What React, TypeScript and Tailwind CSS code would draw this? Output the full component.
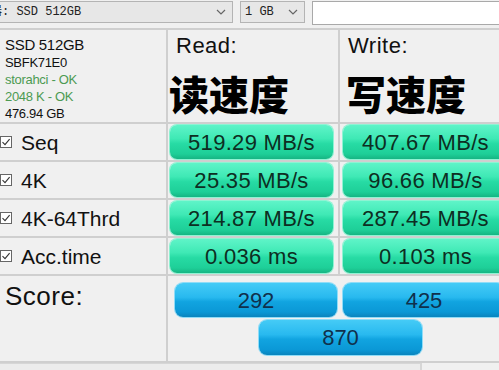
import React from "react";

const green =
  "bg-[linear-gradient(to_bottom,#5ff4c8_0%,#3fe9b5_40%,#27dba4_55%,#1ecf98_85%,#16b583_100%)] shadow-[0_0_0_1px_#8ef3d3]";
const blue =
  "bg-[linear-gradient(to_bottom,#45cbf6_0%,#28b9ef_42%,#11a4e0_55%,#0b98d6_85%,#0a84bd_100%)] shadow-[0_0_0_1px_#8fdcf7]";

function Check() {
  return (
    <svg width="12" height="12" viewBox="0 0 12 12" className="shrink-0">
      <rect x="0.5" y="0.5" width="11" height="11" fill="#fff" stroke="#666" strokeWidth="1" />
      <path d="M2.5 6.2 L5 8.6 L9.6 3.2" fill="none" stroke="#333" strokeWidth="1.1" />
    </svg>
  );
}

function Chevron() {
  return (
    <svg width="10" height="6" viewBox="0 0 10 6">
      <path d="M1 1 L5 5 L9 1" fill="none" stroke="#666" strokeWidth="1.2" />
    </svg>
  );
}

const rows = [
  { label: "Seq", r: "519.29 MB/s", w: "407.67 MB/s" },
  { label: "4K", r: "25.35 MB/s", w: "96.66 MB/s" },
  { label: "4K-64Thrd", r: "214.87 MB/s", w: "287.45 MB/s" },
  { label: "Acc.time", r: "0.036 ms", w: "0.103 ms" },
];

export default function App() {
  return (
    <div className="w-[499px] h-[370px] overflow-hidden bg-[#f0f0f0] font-['Liberation_Sans',Arial,sans-serif] text-[#111]">
      {/* top bar */}
      <div className="h-[30px] border-b-2 border-[#cfcfcf] flex items-start pt-[1px] w-[520px]">
        <div className="ml-[-4px] w-[237px] h-[22px] border border-[#b4b4b4] bg-[#e7e7e7] flex items-center justify-between pr-[6px] overflow-hidden">
          <span className="ml-[-7px] text-[12px] font-['Liberation_Mono','Noto_Sans_CJK_SC',monospace] text-[#222] whitespace-pre">
            器: SSD 512GB
          </span>
          <Chevron />
        </div>
        <div className="ml-[7px] w-[65px] h-[22px] border border-[#b4b4b4] bg-[#e7e7e7] flex items-center justify-between pl-[4px] pr-[6px]">
          <span className="text-[12px] font-['Liberation_Mono',monospace] text-[#222] whitespace-pre">1 GB</span>
          <Chevron />
        </div>
        <div className="ml-[7px] w-[200px] h-[24px] border border-[#a9a9a9] bg-white" />
      </div>

      {/* main grid */}
      <div className="grid grid-cols-[168px_172px_172px] w-[512px]">
        {/* header */}
        <div className="h-[94px] border-r-2 border-b-2 border-[#cfcfcf] pl-[5px] pt-[5px] tracking-[-0.3px]">
          <div className="text-[15px] leading-[19px]">SSD 512GB</div>
          <div className="text-[13px] leading-[17px]">SBFK71E0</div>
          <div className="text-[13px] leading-[17px] text-[#4c9a52]">storahci - OK</div>
          <div className="text-[13px] leading-[17px] text-[#4c9a52]">2048 K - OK</div>
          <div className="text-[13px] leading-[17px]">476.94 GB</div>
        </div>
        <div className="h-[94px] border-r-2 border-b-2 border-[#cfcfcf] pt-[3px]">
          <div className="pl-[8px] text-[22px] leading-[26px] tracking-[0.5px]">Read:</div>
          <div className="pl-[1px] mt-[12px] text-[40px] leading-[44px] font-black font-['Noto_Sans_CJK_SC',sans-serif] text-black">
            读速度
          </div>
        </div>
        <div className="h-[94px] border-b-2 border-[#cfcfcf] pt-[3px]">
          <div className="pl-[8px] text-[22px] leading-[26px] tracking-[0.5px]">Write:</div>
          <div className="pl-[6px] mt-[12px] text-[40px] leading-[44px] font-black font-['Noto_Sans_CJK_SC',sans-serif] text-black">
            写速度
          </div>
        </div>

        {rows.map((row) => (
          <React.Fragment key={row.label}>
            <div className="h-[38px] border-r-2 border-b-2 border-[#cfcfcf] flex items-center">
              <Check />
              <span className="ml-[9px] text-[21px] leading-none">{row.label}</span>
            </div>
            <div className="h-[38px] border-r-2 border-b-2 border-[#cfcfcf] pl-[2px] pr-[5px] py-[1px]">
              <div className={`h-full rounded-[7px] ${green} flex items-center justify-center text-[22px] tracking-[0.3px] text-[#0d2e22]`}>
                {row.r}
              </div>
            </div>
            <div className="h-[38px] border-b-2 border-[#cfcfcf] pl-[3px] pr-[4px] py-[1px]">
              <div className={`h-full rounded-[7px] ${green} flex items-center justify-center text-[22px] tracking-[0.3px] text-[#0d2e22]`}>
                {row.w}
              </div>
            </div>
          </React.Fragment>
        ))}

        {/* score */}
        <div className="h-[87px] border-r-2 border-b-2 border-[#cfcfcf] pl-[5px] pt-[5px]">
          <div className="text-[26px] leading-[30px] tracking-[0.5px]">Score:</div>
        </div>
        <div className="col-span-2 h-[87px] border-b-2 border-[#cfcfcf] pt-[7px]">
          <div className="flex gap-[6px] pl-[7px]">
            <div className={`w-[162px] h-[34px] rounded-[8px] ${blue} flex items-center justify-center text-[22px] text-[#10304c]`}>292</div>
            <div className={`w-[162px] h-[34px] rounded-[8px] ${blue} flex items-center justify-center text-[22px] text-[#10304c]`}>425</div>
          </div>
          <div className={`ml-[91px] mt-[3px] w-[163px] h-[35px] rounded-[8px] ${blue} flex items-center justify-center text-[22px] text-[#10304c]`}>870</div>
        </div>
      </div>

      {/* bottom strip */}
      <div className="flex h-[10px]">
        <div className="w-[422px] border-r-2 border-t border-[#d6d6d6] bg-[#ececec]" />
      </div>
    </div>
  );
}
